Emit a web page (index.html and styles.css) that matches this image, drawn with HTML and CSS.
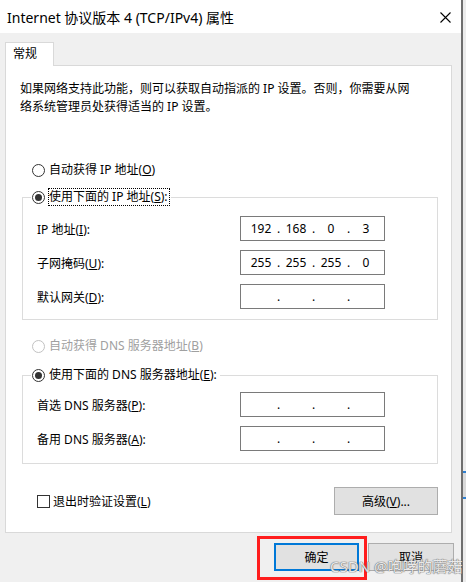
FILE: index.html
```html
<!DOCTYPE html>
<html lang="zh-CN">
<head>
<meta charset="utf-8">
<title>Internet 协议版本 4 (TCP/IPv4) 属性</title>
<link rel="stylesheet" href="styles.css">
</head>
<body>
<div class="screen">
  <div class="window">
    <div class="titlebar">
      <span class="title">Internet 协议版本 4 (TCP/IPv4) 属性</span>
      <svg class="close" width="11" height="11" viewBox="0 0 11 11"><path d="M0.5 0.5L10.5 10.5M10.5 0.5L0.5 10.5" stroke="#000" stroke-width="1.1" fill="none"/></svg>
    </div>
    <div class="tabs"><div class="tab">常规</div></div>
    <div class="panel">
      <p class="desc">如果网络支持此功能，则可以获取自动指派的 IP 设置。否则，你需要从网<br>络系统管理员处获得适当的 IP 设置。</p>

      <div class="radio first"><span class="circle"></span><span class="rtext">自动获得 IP 地址(<u>O</u>)</span></div>

      <fieldset class="group g-ip">
        <legend><div class="radio"><span class="circle on"></span><span class="rtext focus">使用下面的 IP 地址(<u>S</u>):</span></div></legend>
        <div class="field first-field"><span class="lbl">IP 地址(<u>I</u>):</span>
          <div class="ip"><span>192</span><i>.</i><span>168</span><i>.</i><span>0</span><i>.</i><span>3</span></div>
        </div>
        <div class="field"><span class="lbl">子网掩码(<u>U</u>):</span>
          <div class="ip"><span>255</span><i>.</i><span>255</span><i>.</i><span>255</span><i>.</i><span>0</span></div>
        </div>
        <div class="field"><span class="lbl">默认网关(<u>D</u>):</span>
          <div class="ip"><span></span><i>.</i><span></span><i>.</i><span></span><i>.</i><span></span></div>
        </div>
      </fieldset>

      <div class="radio disabled dns-auto"><span class="circle"></span><span class="rtext">自动获得 DNS 服务器地址(<u>B</u>)</span></div>

      <fieldset class="group g-dns">
        <legend><div class="radio"><span class="circle on"></span><span class="rtext">使用下面的 DNS 服务器地址(<u>E</u>):</span></div></legend>
        <div class="field dns-first"><span class="lbl">首选 DNS 服务器(<u>P</u>):</span>
          <div class="ip"><span></span><i>.</i><span></span><i>.</i><span></span><i>.</i><span></span></div>
        </div>
        <div class="field"><span class="lbl">备用 DNS 服务器(<u>A</u>):</span>
          <div class="ip"><span></span><i>.</i><span></span><i>.</i><span></span><i>.</i><span></span></div>
        </div>
      </fieldset>

      <div class="panel-foot">
        <div class="check"><span class="box"></span><span>退出时验证设置(<u>L</u>)</span></div>
        <div class="btn advanced">高级(<u>V</u>)...</div>
      </div>
    </div>
    <div class="actions">
      <div class="btn ok">确定</div>
      <div class="btn cancel">取消</div>
    </div>
  </div>
  <div class="edge"><div class="edge-top"></div><div class="edge-line"></div><div class="edge-block"></div><div class="edge-line"></div></div>
</div>
<div class="highlight"></div>
<div class="watermark">CSDN @咆哮的蘑菇</div>
</body>
</html>
```

FILE: styles.css
```css
html, body {
  margin: 0;
  padding: 0;
}
body {
  width: 466px;
  height: 582px;
  overflow: hidden;
  position: relative;
  background: #e9e9e9;
  font-family: "Noto Sans", "Noto Sans CJK SC", sans-serif;
  font-size: 12px;
  color: #000;
}
u { text-underline-offset: 1px; }

.screen {
  display: flex;
  height: 582px;
}
.window {
  width: 461px;
  flex: none;
  border-right: 2px solid #6f6f6f;
  background: #f0f0f0;
  display: flex;
  flex-direction: column;
}
.titlebar {
  height: 33px;
  flex: none;
  background: #fff;
  display: flex;
  align-items: center;
  justify-content: space-between;
  padding: 2px 10px 0 7px;
  box-sizing: border-box;
}
.title {
  font-size: 14px;
  line-height: 20px;
}
.close { display: block; margin-top: -1px; }

.tabs {
  margin-top: 9px;
  padding-left: 5px;
  display: flex;
  position: relative;
  z-index: 1;
}
.tab {
  width: 49px;
  height: 24px;
  margin-bottom: -1px;
  box-sizing: border-box;
  border: 1px solid #d9d9d9;
  border-bottom: none;
  background: #fff;
  padding-left: 7px;
  line-height: 22px;
}

.panel {
  margin-left: 5px;
  width: 447px;
  box-sizing: border-box;
  border: 1px solid #d9d9d9;
  background: #fff;
  padding: 14px 0 17px 0;
}
.desc {
  margin: 0 0 0 14px;
  line-height: 18px;
}

.radio {
  display: flex;
  align-items: center;
  height: 18px;
}
.radio.first { margin: 45px 0 0 26px; }
.radio.dns-auto { margin: 17px 0 0 26px; }
.circle {
  width: 13px;
  height: 13px;
  box-sizing: border-box;
  border: 1px solid #333;
  border-radius: 50%;
  margin-right: 3px;
  display: flex;
  align-items: center;
  justify-content: center;
  flex: none;
}
.circle.on::after {
  content: "";
  width: 7px;
  height: 7px;
  border-radius: 50%;
  background: #333;
}
.rtext {
  border: 1px dotted transparent;
  padding: 0 1px 0 0;
  line-height: 16px;
}
.rtext.focus { border-color: #000; }
.radio.disabled { color: #a0a0a0; }
.radio.disabled .circle { border-color: #c2c2c2; }

.group {
  margin: 0 0 0 16px;
  width: 416px;
  box-sizing: border-box;
  border: 1px solid #dcdcdc;
  padding: 0 0 10px 8px;
  min-width: 0;
}
.g-ip { margin-top: 9px; }
.g-dns { margin-top: 11px; padding-bottom: 12px; }
.group legend {
  padding: 0 1px;
  line-height: 18px;
}

.field {
  display: flex;
  align-items: center;
  margin: 9px 0 0 6px;
  height: 25px;
}
.field.first-field { margin-top: 10px; }
.field.dns-first { margin-top: 8px; }
.lbl {
  width: 203px;
  flex: none;
}
.ip {
  width: 145px;
  height: 25px;
  box-sizing: border-box;
  border: 1px solid #7a7a7a;
  padding-left: 7px;
  display: grid;
  grid-template-columns: 26px 9px 26px 9px 26px 9px 26px;
  align-items: center;
  line-height: 23px;
}
.ip span, .ip i {
  text-align: center;
  font-style: normal;
}

.panel-foot {
  margin: 23px 13px 0 31px;
  display: flex;
  align-items: center;
  justify-content: space-between;
}
.check {
  display: flex;
  align-items: center;
}
.check .box {
  width: 13px;
  height: 13px;
  box-sizing: border-box;
  border: 1px solid #333;
  margin-right: 3px;
}

.btn {
  box-sizing: border-box;
  height: 28px;
  background: #e1e1e1;
  border: 1px solid #adadad;
  display: flex;
  align-items: center;
  justify-content: center;
}
.advanced { width: 104px; }

.actions {
  margin-top: 10px;
  display: flex;
  justify-content: flex-end;
  gap: 9px;
  padding-right: 7px;
}
.ok {
  width: 85px;
  border: 2px solid #0078d7;
}
.cancel { width: 86px; }

.edge {
  flex: 1;
  background: #ececec;
}
.edge-top { height: 471px; }
.edge-line { height: 2px; background: #2f7fd0; }
.edge-block { height: 24px; background: #d9d9d9; }

.highlight {
  position: absolute;
  left: 257px;
  top: 536px;
  width: 110px;
  height: 44px;
  box-sizing: border-box;
  border: 3px solid #ff1d1d;
}
.watermark {
  position: absolute;
  left: 330px;
  top: 556px;
  font-size: 15px;
  line-height: 20px;
  color: rgba(255, 255, 255, 0.85);
  text-shadow: 0 0 1px #777, 0 0 1px #777, 0 0 1px #777;
  white-space: nowrap;
}
```
